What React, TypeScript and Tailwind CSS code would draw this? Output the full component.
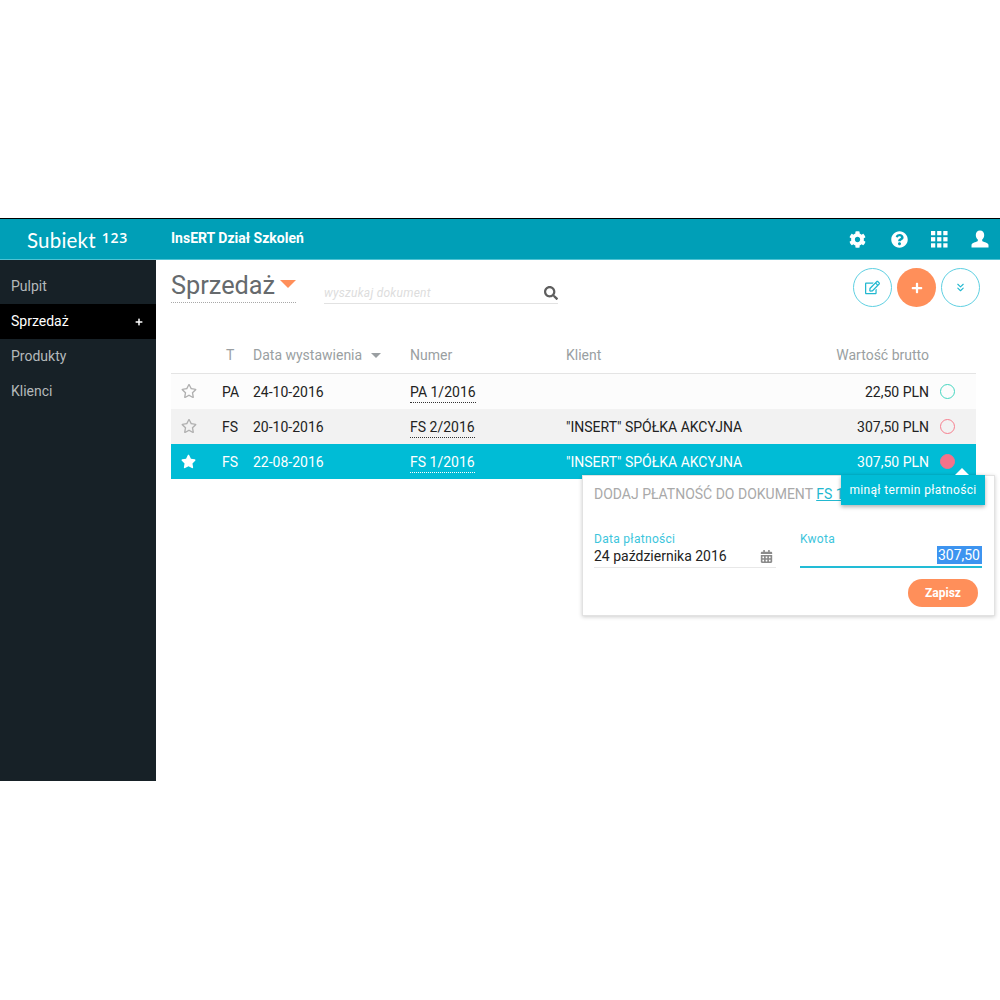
import React from 'react';
import { FaCog, FaQuestionCircle, FaRegEdit, FaPlus, FaSearch, FaStar, FaRegStar, FaCalendarAlt } from 'react-icons/fa';
import { ChevronsDown } from 'lucide-react';

const menu = ['Pulpit', 'Sprzedaż', 'Produkty', 'Klienci'];

const rows = [
  { type: 'PA', date: '24-10-2016', number: 'PA 1/2016', client: '', value: '22,50 PLN', tone: 'plain' },
  { type: 'FS', date: '20-10-2016', number: 'FS 2/2016', client: '"INSERT" SPÓŁKA AKCYJNA', value: '307,50 PLN', tone: 'grey' },
  { type: 'FS', date: '22-08-2016', number: 'FS 1/2016', client: '"INSERT" SPÓŁKA AKCYJNA', value: '307,50 PLN', tone: 'active' },
];

const GridIcon = () => (
  <svg width="17" height="17" viewBox="0 0 18 18" fill="currentColor">
    {[0, 6.5, 13].map((y) =>
      [0, 6.5, 13].map((x) => <rect key={`${x}-${y}`} x={x} y={y} width="4.5" height="4.5" />)
    )}
  </svg>
);

// Closer to the old-style user glyph than FaUser: round head flaring into wide shoulders
const UserIcon = () => (
  <svg width="18" height="18" viewBox="0 0 18 18" fill="currentColor">
    <path d="M9 0.5c2.6 0 4.2 1.9 4.2 4.5 0 2-0.9 3.6-2 4.6v1.5c0 0.7 5.8 1.6 6.3 3.6V17.5H0.5v-2.8c0.5-2 6.3-2.9 6.3-3.6V9.6c-1.1-1-2-2.6-2-4.6C4.8 2.4 6.4 0.5 9 0.5z" />
  </svg>
);

const App = () => {
  return (
    <div className="w-[1000px] h-[1000px] bg-white pt-[218px] font-['Roboto',sans-serif] overflow-hidden">
      <header className="h-[42px] border-t border-black border-b border-b-[#4fc3d3] bg-[#009fb7] flex items-center text-white">
        <div className="w-[171px] pl-[27px] flex items-start shrink-0 mt-[1px]">
          <span className="font-['Lato',sans-serif] text-[20.5px] leading-6 tracking-[0.2px]">Subiekt</span>
          <span className="ml-[6px] mt-[2px] font-['Open_Sans',sans-serif] text-[14px] leading-4 tracking-[0.8px] font-semibold">123</span>
        </div>
        <div className="text-sm font-bold -mt-[3px]">InsERT Dział Szkoleń</div>
        <div className="ml-auto flex items-center">
          <FaCog className="w-[17px] h-[17px] mr-[25px]" />
          <FaQuestionCircle className="w-[17px] h-[17px] mr-[23px]" />
          <GridIcon />
          <div className="ml-[23px] mr-[11px]"><UserIcon /></div>
        </div>
      </header>

      <div className="flex h-[521px]">
        <aside className="w-[156px] bg-[#172127] pt-[9px] shrink-0">
          {menu.map((item) => (
            <div
              key={item}
              className={`h-[35px] pl-[11px] pr-[13px] flex items-center justify-between text-sm ${
                item === 'Sprzedaż' ? 'bg-black text-white' : 'text-[#b4b9bb]'
              }`}
            >
              <span className="-mt-[1px]">{item}</span>
              {item === 'Sprzedaż' && <FaPlus className="w-2 h-2" />}
            </div>
          ))}
        </aside>

        <main className="relative flex-1 pl-[15px] pr-6">
          <div className="h-[80px] flex items-start pt-[7px]">
            <div className="w-[125px] h-[36px] border-b border-dotted border-[#a8a8a8] flex items-center">
              <span className="text-[25.3px] leading-8 mt-[2px] text-[#666a6d]">Sprzedaż</span>
              <span className="ml-[5px] -mt-[2px] w-0 h-0 border-x-[8px] border-x-transparent border-t-[8px] border-t-[#ff8f5a]" />
            </div>
            <div className="ml-[28px] mt-[5px] w-[234px] h-[32px] border-b border-[#e2e2e2] flex items-end justify-between pb-[2px]">
              <span className="text-xs italic text-[#dddddd] tracking-[0.25px]">wyszukaj dokument</span>
              <FaSearch className="w-[14px] h-[14px] text-[#5e5e5e] mb-[1px]" />
            </div>
            <div className="ml-auto -mr-[4px] flex gap-[5px] mt-[1px]">
              <div className="w-[39px] h-[39px] rounded-full border border-[#5fd0e2] flex items-center justify-center text-[#22b8d0]">
                <FaRegEdit className="w-[15px] h-[15px]" />
              </div>
              <div className="w-[39px] h-[39px] rounded-full bg-[#ff8f5a] flex items-center justify-center text-white">
                <FaPlus className="w-3 h-3" />
              </div>
              <div className="w-[39px] h-[39px] rounded-full border border-[#5fd0e2] flex items-center justify-center text-[#22b8d0]">
                <ChevronsDown className="w-[13px] h-[13px]" strokeWidth={2} />
              </div>
            </div>
          </div>

          <div className="h-[34px] pb-[3px] border-b border-[#e4e4e4] flex items-center text-sm text-[#9a9fa2]">
            <div className="w-[51px]" />
            <div className="w-[31px] pl-[4px]">T</div>
            <div className="w-[157px] flex items-center">
              Data wystawienia
              <span className="ml-[9px] mt-[1px] w-0 h-0 border-x-[5px] border-x-transparent border-t-[5px] border-t-[#9a9fa2]" />
            </div>
            <div className="w-[156px]">Numer</div>
            <div className="w-[200px]">Klient</div>
            <div className="w-[163px] text-right">Wartość brutto</div>
          </div>

          {rows.map((row) => {
            const active = row.tone === 'active';
            return (
              <div
                key={row.number}
                className={`h-[35px] flex items-center text-sm ${
                  active ? 'bg-[#00bcd6] text-white' : row.tone === 'grey' ? 'bg-[#f2f2f2] text-[#222222]' : 'bg-[#fcfcfc] text-[#222222]'
                }`}
              >
                <div className="w-[51px] pl-[10px] -mt-[1px]">
                  {active ? <FaStar className="w-[15px] h-[15px] text-white" /> : <FaRegStar className="w-4 h-4 text-[#b0b0b0]" />}
                </div>
                <div className="w-[31px]">{row.type}</div>
                <div className="w-[157px]">{row.date}</div>
                <div className="w-[156px]">
                  <span className={`border-b border-dotted pb-[2px] ${active ? 'border-white' : 'border-[#333333]'}`}>{row.number}</span>
                </div>
                <div className="w-[200px]">{row.client}</div>
                <div className="w-[163px] text-right">{row.value}</div>
                <div className="ml-[11px] -mt-[1px]">
                  <div
                    className={`w-[15px] h-[15px] rounded-full border ${
                      row.tone === 'plain' ? 'border-[#45d6c0]' : row.tone === 'grey' ? 'border-[#f77f8e]' : 'border-[#f4728a] bg-[#f4728a]'
                    }`}
                  />
                </div>
              </div>
            );
          })}

          {/* payment popup under the selected row */}
          <div className="absolute left-[426px] top-[215px] w-[413px] h-[141px] bg-white border border-[#e2e2e2] shadow-[0_1px_4px_rgba(0,0,0,0.2)] pl-[12px] pr-[12px] pt-[8px] text-sm">
            <div className="text-[#a9a9a9] whitespace-nowrap overflow-hidden -ml-[1px]">
              DODAJ PŁATNOŚĆ DO DOKUMENT <span className="text-[#22b8d0] underline">FS 1/2016</span>
            </div>
            <div className="mt-[27px] flex -ml-[1px]">
              <div className="w-[182px] h-[37px] border-b border-[#e8e8e8]">
                <div className="text-xs leading-[14px] mt-[1px] text-[#3cc5dc] tracking-[0.3px]">Data płatności</div>
                <div className="flex items-center justify-between text-[#222222] h-[20px] pr-[3px]">
                  24 października 2016
                  <FaCalendarAlt className="w-[13px] h-[13px] text-[#8a8a8a]" />
                </div>
              </div>
              <div className="ml-[24px] w-[182px] h-[37px] border-b-2 border-[#22bcd6]">
                <div className="text-xs leading-[14px] mt-[1px] text-[#3cc5dc] tracking-[0.3px]">Kwota</div>
                <div className="h-[20px] flex justify-end">
                  <span className="bg-[#3d94f0] text-white pl-[1px] pr-[2px] h-[18px] leading-[18px]">307,50</span>
                </div>
              </div>
            </div>
            <div className="mt-[11px] flex justify-end pr-[4px]">
              <div className="w-[70px] h-[28px] rounded-full bg-[#ff8f5a] text-white text-xs font-bold flex items-center justify-center">Zapisz</div>
            </div>
          </div>

          {/* tooltip over the popup */}
          <div className="absolute left-[685px] top-[215px] w-[144px] h-[30px] bg-[#00bcd6] text-white text-xs tracking-[0.35px] flex items-center justify-center shadow-[0_2px_4px_rgba(0,0,0,0.3)]">
            minął termin płatności
          </div>
          <span className="absolute left-[799px] top-[208px] w-0 h-0 border-x-[7px] border-x-transparent border-b-[7px] border-b-white" />
        </main>
      </div>
    </div>
  );
};

export default App;
